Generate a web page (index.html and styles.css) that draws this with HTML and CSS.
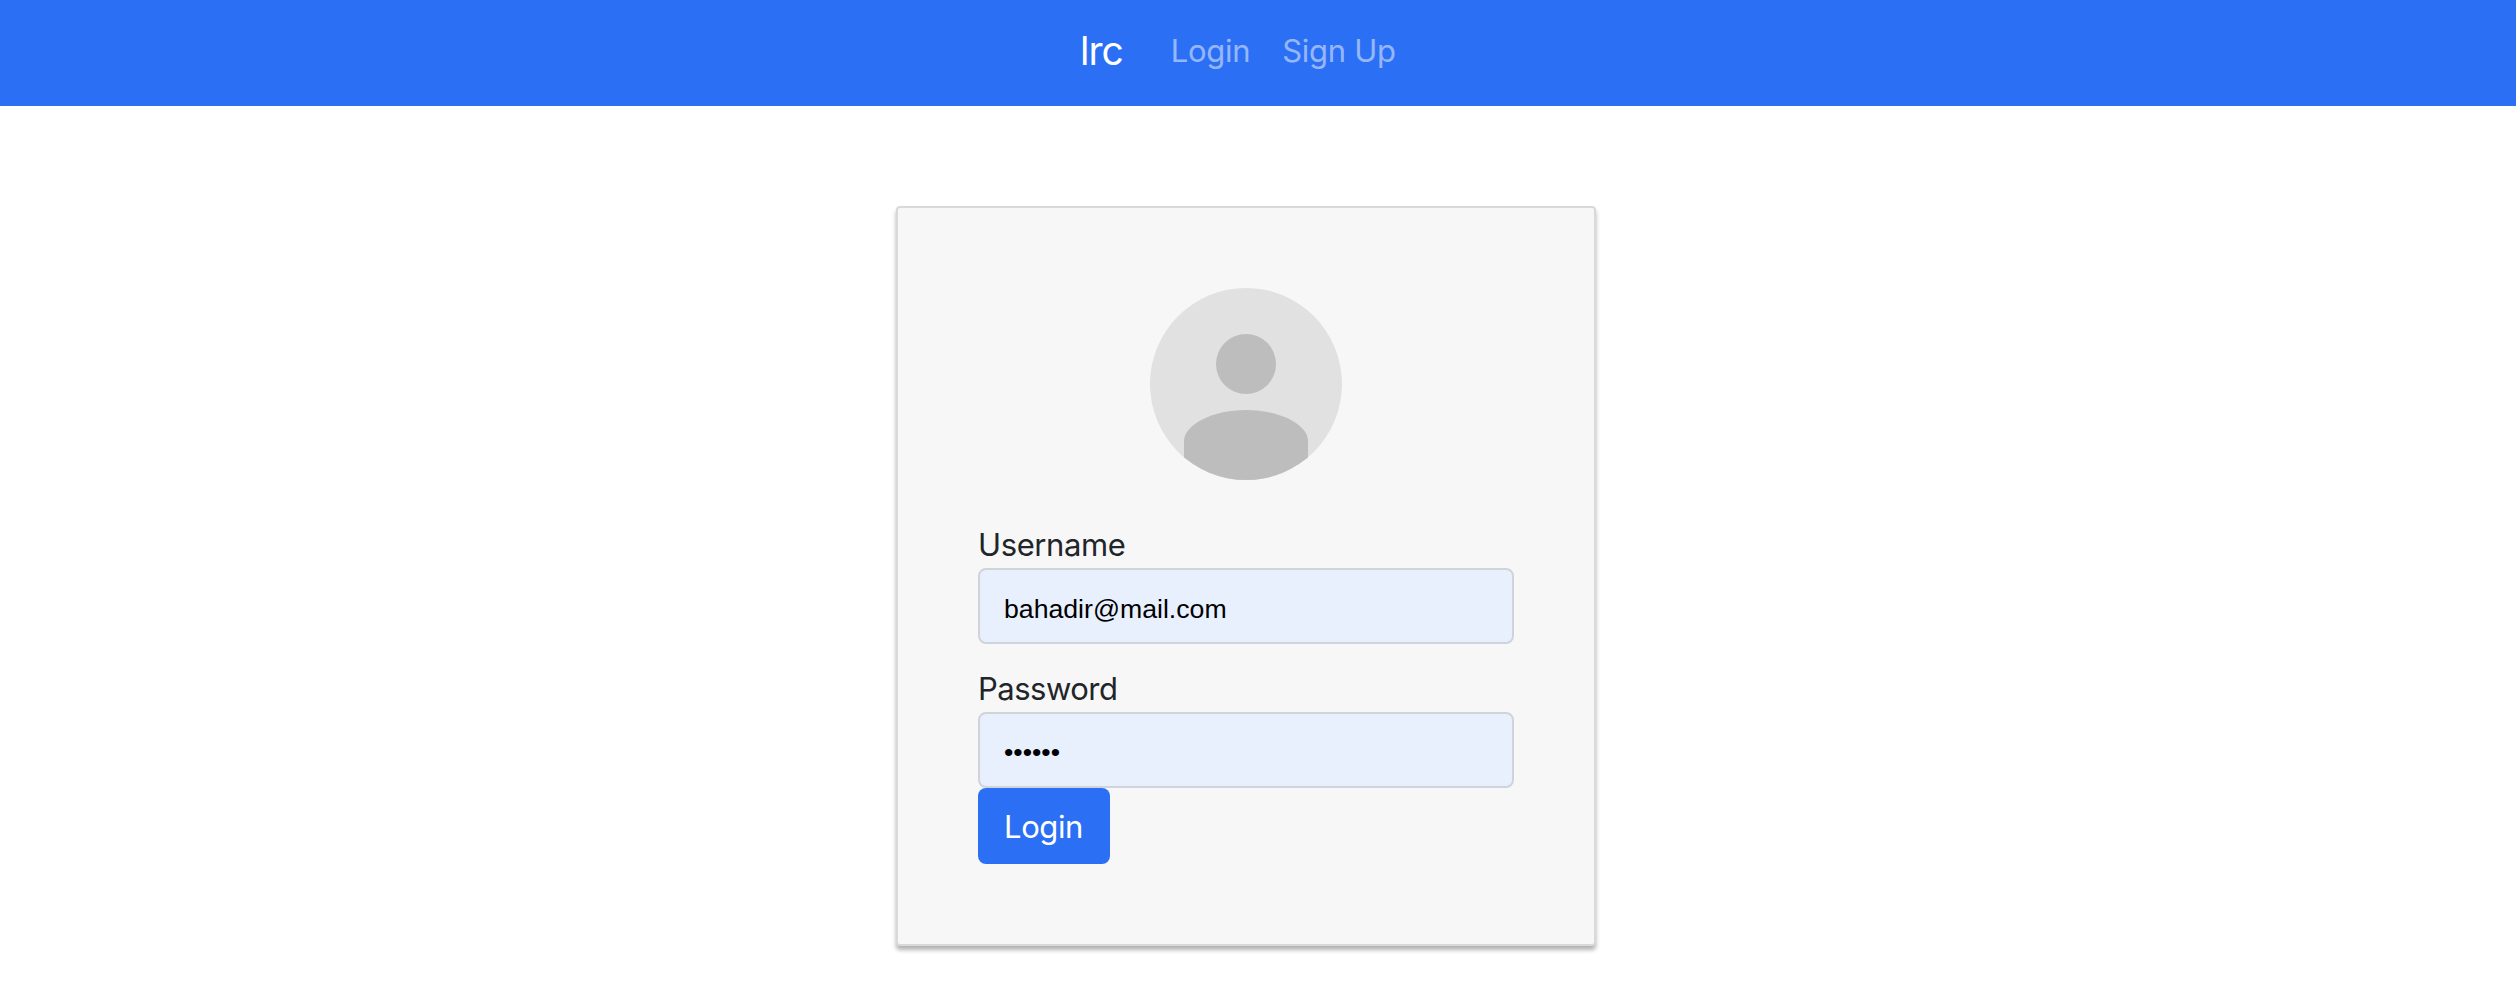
FILE: index.html
```html
<!DOCTYPE html>
<html lang="en">
<head>
<meta charset="utf-8">
<title>lrc</title>
<link rel="stylesheet" href="styles.css">
</head>
<body>
<nav class="navbar">
  <a class="brand">lrc</a>
  <a class="nav-link">Login</a>
  <a class="nav-link">Sign Up</a>
</nav>
<main class="page">
  <form class="card">
    <svg class="avatar" viewBox="0 0 192 192">
      <defs><clipPath id="round"><circle cx="96" cy="96" r="96"/></clipPath></defs>
      <circle cx="96" cy="96" r="96" fill="#e1e1e1"/>
      <g clip-path="url(#round)" fill="#bdbdbd">
        <circle cx="96" cy="76" r="30"/>
        <path d="M34 192V153C34 137 62 122 96 122S158 137 158 153V192Z"/>
      </g>
    </svg>
    <label class="label" for="username">Username</label>
    <input class="field" id="username" type="text" value="bahadir@mail.com">
    <label class="label label-password" for="password">Password</label>
    <input class="field field-password" id="password" type="password" value="secret">
    <button class="button" type="button">Login</button>
  </form>
</main>
</body>
</html>
```
FILE: styles.css
```css
* { box-sizing: border-box; }
body {
  margin: 0;
  height: 1006px;
  overflow: hidden;
  background: #fff;
  color: #212529;
  font: 31px/48px Inter, "Liberation Sans", sans-serif;
}
.navbar {
  display: flex;
  align-items: center;
  height: 106px;
  padding: 0 0 4px 1080px;
  background: #2b6ff5;
}
.brand {
  color: #fff;
  font-size: 39px;
  line-height: 60px;
  letter-spacing: -1px;
  margin-right: 48px;
}
.nav-link {
  color: rgba(255, 255, 255, .5);
  letter-spacing: -.3px;
  margin-right: 32px;
}
.page {
  display: flex;
  justify-content: center;
  padding: 100px 24px 0 0;
}
.card {
  display: flex;
  flex-direction: column;
  align-items: flex-start;
  width: 700px;
  height: 740px;
  padding: 80px;
  border: 2px solid #d9d9d9;
  border-radius: 4px;
  background: #f7f7f7;
  box-shadow: 0 4px 4px rgba(0, 0, 0, .3);
}
.avatar {
  width: 192px;
  height: 192px;
  margin: 0 auto 40px;
}
.label {
  height: 48px;
  padding-top: 1px;
  letter-spacing: -.4px;
}
.label-password {
  margin-top: 20px;
  letter-spacing: -.5px;
}
.field {
  width: 100%;
  height: 76px;
  padding: 6px 24px 0;
  border: 2px solid #ced4da;
  border-radius: 8px;
  outline: 0;
  background: #e8f0fe;
  color: #000;
  font: 26.667px "Liberation Sans", Arial, sans-serif;
}
.field-password { padding-top: 4px; }
.button {
  width: 132px;
  height: 76px;
  padding: 2px 1px 0 0;
  border: 0;
  border-radius: 8px;
  background: #2b6ff5;
  color: #fff;
  font: inherit;
  letter-spacing: -.4px;
}
```
